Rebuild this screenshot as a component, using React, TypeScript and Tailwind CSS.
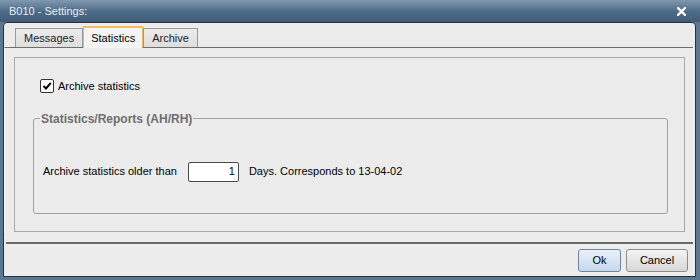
import React from "react";

const font = { fontFamily: '"Liberation Sans", Arial, sans-serif' };

const Tab = ({ label, active }: { label: string; active?: boolean }) =>
  active ? (
    <div className="relative z-10 -mb-px h-[22px] px-[7px] flex items-start pt-[2px] bg-[#f4f4f4] border border-b-0 border-[#e2b85a] border-t-2 border-t-[#f0c060] text-[11px] text-black">
      {label}
    </div>
  ) : (
    <div className="h-[19px] px-[8px] flex items-center bg-gradient-to-b from-[#ececec] to-[#dedede] border border-b-0 border-[#9a9a9a] text-[11px] text-[#222]">
      {label}
    </div>
  );

const App = () => {
  return (
    <div style={font} className="w-[700px] h-[280px] flex flex-col bg-[#5b7893] overflow-hidden">
      <div className="h-[22px] shrink-0 flex items-center justify-between pl-[9px] pr-[14px] bg-gradient-to-b from-[#8199b0] via-[#4f6d89] to-[#3e5c78]">
        <span className="text-[11px] text-[#e9eef3]">B010 - Settings:</span>
        <svg width="9" height="9" viewBox="0 0 9 9">
          <path d="M1 1 L8 8 M8 1 L1 8" stroke="#ffffff" strokeWidth="2.4" strokeLinecap="square" />
        </svg>
      </div>

      <div className="flex-1 flex flex-col ml-[3px] mr-[4px] mb-[3px] border border-[#26313c] rounded-t-[4px] bg-[#ececec]">
        <div className="h-[24px] flex items-end pl-[11px]">
          <Tab label="Messages" />
          <Tab label="Statistics" active />
          <Tab label="Archive" />
        </div>

        <div className="mr-[2px] border-t border-[#6e6e6e] border-l border-l-[#fafafa] pt-[9px] pl-[9px] pr-[8px] h-[186px]">
          <div className="h-[175px] border border-[#a9a9a9] flex flex-col">
            <label className="flex items-center gap-[4px] mt-[20px] ml-[25px] text-[11px] text-black">
              <span className="w-[14px] h-[14px] bg-white border border-[#333] rounded-[2px] flex items-center justify-center">
                <svg width="10" height="10" viewBox="0 0 10 10">
                  <path d="M1.5 5 L4 7.5 L8.8 1.8" fill="none" stroke="#000" strokeWidth="2" />
                </svg>
              </span>
              Archive statistics
            </label>

            <fieldset className="mt-[15px] ml-[18px] mr-[16px] h-[104px] border border-[#a2a2a2] rounded-[3px] px-[9px]">
              <legend className="ml-[-3px] px-[1px] text-[12px] font-bold text-[#6e6e6e]">
                Statistics/Reports (AH/RH)
              </legend>
              <div className="flex items-center mt-[34px] text-[11px] text-black">
                <span>Archive statistics older than</span>
                <div className="ml-[11px] w-[51px] h-[20px] bg-white border border-[#4a4a4a] rounded-[2px] flex items-center justify-end pr-[3px]">
                  1
                </div>
                <span className="ml-[10px]">Days. Corresponds to 13-04-02</span>
              </div>
            </fieldset>
          </div>
        </div>

        <div className="mt-[9px] ml-[2px] mr-[2px] border-t-2 border-[#6a6a6a]" />

        <div className="flex justify-end gap-[5px] mt-[5px] mr-[7px]">
          <button className="w-[43px] h-[23px] text-[11px] text-black border border-[#6f849a] rounded-[3px] bg-gradient-to-b from-[#eaf2fa] to-[#c6d9ec]">
            Ok
          </button>
          <button className="w-[62px] h-[23px] text-[11px] text-black border border-[#8c8c8c] rounded-[3px] bg-gradient-to-b from-[#f4f4f4] to-[#d8d8d8]">
            Cancel
          </button>
        </div>
      </div>
    </div>
  );
};

export default App;
